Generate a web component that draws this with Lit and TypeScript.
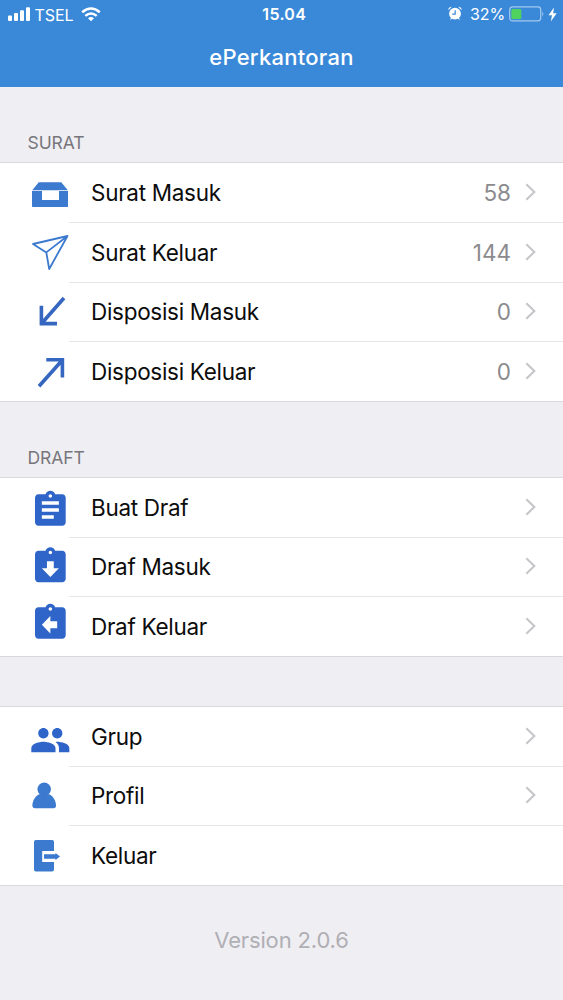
import { LitElement, html, svg, css, nothing, type SVGTemplateResult } from "lit";
import { customElement, property } from "lit/decorators.js";

const clipboard =
  "M19 3h-4.18C14.4 1.84 13.3 1 12 1c-1.3 0-2.4.84-2.82 2H5c-1.1 0-2 .9-2 2v14c0 1.1.9 2 2 2h14c1.1 0 2-.9 2-2V5c0-1.1-.9-2-2-2zm-7 0c.55 0 1 .45 1 1s-.45 1-1 1-1-.45-1-1 .45-1 1-1z";

// Every icon is drawn on a 69 x 60 canvas: the leading cell of a list row.
const icons: Record<string, SVGTemplateResult> = {
  inbox: svg`<path fill="#3c7acf" d="M38.8 19.3H61.3L67.8 27.3H32.2zM32 27.9H42V37H59V27.9H68V43.2Q68 44 67.2 44H32.8Q32 44 32 43.2z"/>`,
  plane: svg`<path fill="none" stroke="#3c7acf" stroke-width="1.8" stroke-linejoin="round" d="M33 22L67.5 14L49.2 47L46.3 30.4zM33 22L46.3 30.4L67.5 14"/>`,
  arrowIn: svg`<path fill="none" stroke="#3566c0" stroke-width="3.6" d="M64 16L41.8 41.2M41.4 23.800V41.600H57"/>`,
  arrowOut: svg`<path fill="none" stroke="#3566c0" stroke-width="3.6" d="M39 45.2L62.4 19M46.3 18.8H62.4V36.6"/>`,
  draft: svg`<path fill="#2f64c9" transform="translate(29.9 12) scale(1.705 1.75)" d="${clipboard}m2 14H7v-2h7v2zm3-4H7v-2h10v2zm0-4H7V7h10v2z"/>`,
  draftIn: svg`<path fill="#2f64c9" transform="translate(29.9 8.6) scale(1.705 1.75)" d="${clipboard}m0 15l-5-5h3V9h4v4h3l-5 5z"/>`,
  draftOut: svg`<path fill="#2f64c9" transform="translate(29.9 6) scale(1.705 1.75)" d="${clipboard}m4 12h-4v3l-5-5 5-5v3h4v4z"/>`,
  group: svg`<path fill="#2f64c9" transform="translate(29.6 13.4) scale(1.727)" d="M16 11c1.66 0 2.99-1.34 2.99-3S17.66 5 16 5c-1.66 0-3 1.34-3 3s1.34 3 3 3zm-8 0c1.66 0 2.99-1.34 2.99-3S9.66 5 8 5C6.34 5 5 6.34 5 8s1.34 3 3 3zm0 2c-2.33 0-7 1.17-7 3.5V19h14v-2.5c0-2.33-4.67-3.5-7-3.5zm8 0c-.29 0-.62.02-.97.05 1.16.84 1.97 1.97 1.97 3.45V19h6v-2.5c0-2.33-4.67-3.5-7-3.5z"/>`,
  person: svg`<circle cx="44.2" cy="23.2" r="6.7" fill="#3c7acf"/><path fill="#3c7acf" d="M39 28.2H49.400C53.400 30.600 56 34.800 56 39.500Q56 42.300 53.500 42.300H35Q32.400 42.300 32.400 39.500C32.400 34.800 35 30.600 39 28.200z"/>`,
  exit: svg`<path fill="#3c7acf" d="M36 15H52Q54 15 54 17V26H42.2V37H54V44.5Q54 46.5 52 46.5H36Q34 46.5 34 44.5V17Q34 15 36 15zM44 29.3H55.5V28L60 31.5L55.5 35V33.7H44z"/>`,
};

@customElement("menu-row")
class MenuRow extends LitElement {
  @property() icon = "";
  @property() label = "";
  @property() count?: string;
  @property({ type: Boolean }) chevron = false;

  static styles = css`
    :host { display: flex; height: 59.6px; }
    .icon { width: 69px; height: 60px; flex: none; overflow: visible; }
    .body {
      flex: 1; display: flex; align-items: center; box-sizing: border-box;
      padding: 0 27px 0 22px; border-top: 1px solid var(--line, #e6e6e8);
    }
    .label { flex: 1; font-size: 22.5px; letter-spacing: -0.3px; color: #0c0c0c; }
    .count { font-size: 22.5px; color: #8b8b8e; margin-right: 14px; }
    .chevron { width: 11px; height: 18px; margin-top: -1px; }
  `;

  render() {
    return html`
      <svg class="icon" viewBox="0 0 69 60">${icons[this.icon]}</svg>
      <div class="body">
        <span class="label">${this.label}</span>
        ${this.count ? html`<span class="count">${this.count}</span>` : nothing}
        ${this.chevron
          ? html`<svg class="chevron" viewBox="0 0 11 18">
              <path d="M1.3 1.2L9.3 9L1.3 16.8" fill="none" stroke="#c6c5c9" stroke-width="2.1"/>
            </svg>`
          : nothing}
      </div>`;
  }
}

@customElement("app-root")
class AppRoot extends LitElement {
  static styles = css`
    :host {
      display: flex; flex-direction: column; height: 1000px; overflow: hidden;
      background: #efeef3; font-family: Inter, "Liberation Sans", sans-serif;
    }
    .header { height: 87px; flex: none; background: #3a89d9; color: #fff; }
    .status {
      height: 28px; display: grid; grid-template-columns: 1fr auto 1fr;
      align-items: center; padding: 0 6px 0 8px; font-size: 16px;
    }
    .left, .right { display: flex; align-items: center; }
    .right { justify-content: flex-end; }
    .signal { width: 23px; height: 15px; }
    .carrier { margin: 1px 8px 0 3.5px; letter-spacing: -0.1px; }
    .wifi { width: 20px; height: 15px; }
    .time { font-weight: 600; letter-spacing: 0.3px; padding: 0 0 0 3.5px; }
    .alarm { width: 14px; height: 15px; margin: -1px 8px 0 0; }
    .percent { letter-spacing: -0.1px; margin-right: 4px; }
    .battery { width: 36px; height: 16px; }
    .bolt { width: 9px; height: 15px; margin-left: 3px; }
    .title { text-align: center; font-size: 22px; line-height: 28px; font-weight: 550; letter-spacing: 0.25px; padding-top: 15px; }
    .heading {
      box-sizing: border-box; height: 75px; padding: 45px 0 0 27.5px;
      font-size: 17.5px; line-height: 22px; letter-spacing: -0.1px; color: #77767b;
    }
    .gap { height: 49px; }
    .group {
      box-sizing: border-box; height: 239.5px; flex: none; background: #fff;
      border-top: 1px solid #d9d8dc; border-bottom: 1px solid #d9d8dc;
    }
    .three { height: 180px; }
    .group menu-row:first-child { --line: transparent; margin-top: -0.5px; }
    .version { text-align: center; font-size: 22px; line-height: 28px; letter-spacing: -0.15px; margin-top: 40px; color: #b0afb4; }
  `;

  render() {
    return html`
      <div class="header">
        <div class="status">
          <div class="left">
            <svg class="signal" viewBox="0 0 23 15" fill="#fff">
              <rect x="0" y="8.5" width="4" height="5.5" rx="1"/>
              <rect x="6" y="6" width="4" height="8" rx="1"/>
              <rect x="12" y="3.3" width="4" height="10.7" rx="1"/>
              <rect x="18" y="0.2" width="4" height="13.8" rx="1"/>
            </svg>
            <span class="carrier">TSEL</span>
            <svg class="wifi" viewBox="0 0 20 15" fill="none" stroke="#fff" stroke-width="2.5">
              <path d="M1.2 5.3Q10 -2.3 18.8 5.3M4.3 8.9Q10 4 15.7 8.9"/>
              <path d="M7 11.2Q10 8.6 13 11.2L10 14.2z" fill="#fff" stroke="none"/>
            </svg>
          </div>
          <span class="time">15.04</span>
          <div class="right">
            <svg class="alarm" viewBox="0 0 14 15" fill="#fff">
              <circle cx="7" cy="7.7" r="5.9"/>
              <path d="M0.3 4.2Q0.3 1 3.8 0.8zM13.7 4.2Q13.7 1 10.2 0.8zM2 14L3.2 11.5L4.5 12.5zM12 14L10.8 11.5L9.5 12.5z"/>
              <path d="M7.2 4.3V8.2H4.2" fill="none" stroke="#3a89d9" stroke-width="1.2"/>
            </svg>
            <span class="percent">32%</span>
            <svg class="battery" viewBox="0 0 36 16">
              <rect x="0.7" y="0.9" width="31" height="14" rx="2.8" fill="none" stroke="#a3c9ef" stroke-width="1.2"/>
              <rect x="2.3" y="2.9" width="10" height="10" rx="1" fill="#50d25f"/>
              <path d="M33.3 5.5Q35.3 8 33.3 10.5z" fill="#a3c9ef"/>
            </svg>
            <svg class="bolt" viewBox="0 0 9 15" fill="#fff"><path d="M6 0.5L0.5 8.3H4L2.8 14.5L8.7 6.2H5.2z"/></svg>
          </div>
        </div>
        <div class="title">ePerkantoran</div>
      </div>
      <div class="heading">SURAT</div>
      <div class="group">
        <menu-row icon="inbox" label="Surat Masuk" count="58" chevron></menu-row>
        <menu-row icon="plane" label="Surat Keluar" count="144" chevron></menu-row>
        <menu-row icon="arrowIn" label="Disposisi Masuk" count="0" chevron></menu-row>
        <menu-row icon="arrowOut" label="Disposisi Keluar" count="0" chevron></menu-row>
      </div>
      <div class="heading">DRAFT</div>
      <div class="group three">
        <menu-row icon="draft" label="Buat Draf" chevron></menu-row>
        <menu-row icon="draftIn" label="Draf Masuk" chevron></menu-row>
        <menu-row icon="draftOut" label="Draf Keluar" chevron></menu-row>
      </div>
      <div class="gap"></div>
      <div class="group three">
        <menu-row icon="group" label="Grup" chevron></menu-row>
        <menu-row icon="person" label="Profil" chevron></menu-row>
        <menu-row icon="exit" label="Keluar"></menu-row>
      </div>
      <div class="version">Version 2.0.6</div>
    `;
  }
}
